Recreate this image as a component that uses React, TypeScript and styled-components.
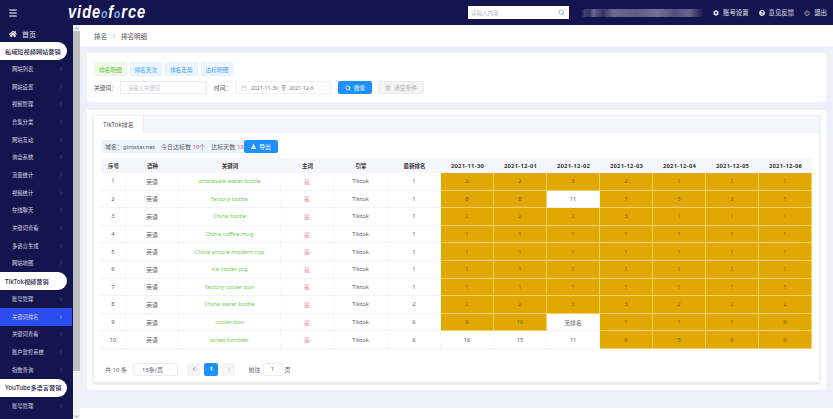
// React keyword rank page
import React from "react";
import styled, { createGlobalStyle } from "styled-components";
import { ChevronDown, ChevronLeft, ChevronRight, ChevronUp, Calendar, Menu, Power, Search, Trash2 } from "lucide-react";
import { FaCog, FaDownload, FaHome, FaQuestionCircle } from "react-icons/fa";

const GlobalStyle = createGlobalStyle`
  html, body {
    margin: 0;
    height: 100%;
    overflow: hidden;
    background: #fff;
    font-family: "Noto Sans", "Noto Sans CJK SC", sans-serif;
    font-size: 6px;
    color: #606266;
  }
  * {
    box-sizing: border-box;
  }
`;

const Shell = styled.div`
  height: 419px;
  width: 833px;
  display: flex;
  flex-direction: column;
  overflow: hidden;
`;

const TopBar = styled.header`
  flex: 0 0 25px;
  background: #14144e;
  display: flex;
  align-items: center;
  color: #fff;
  padding-right: 5px;
`;

const MenuButton = styled.div`
  width: 68px;
  padding-left: 8px;
  display: flex;
  align-items: center;
`;

const LogoSlot = styled.div`
  width: 400px;
`;

const Logo = styled.div`
  display: inline-block;
  transform: scaleX(0.775);
  transform-origin: left center;
  font-family: "Liberation Sans", sans-serif;
  font-size: 19px;
  font-weight: 700;
  font-style: italic;
  letter-spacing: 1.2px;
  color: #fff;
  line-height: 1;
  padding-bottom: 3px;
`;

const LogoDot = styled.span`
  font-size: 13px;
  color: #7fb2ec;
`;

const SearchBox = styled.div`
  width: 101px;
  height: 13px;
  background: #fff;
  display: flex;
  align-items: center;
  justify-content: space-between;
  padding: 0 4px 0 3px;
  color: #b5b8c0;
  font-size: 5.5px;
`;

const Mosaic = styled.div`
  width: 123px;
  height: 8px;
  margin-left: 12px;
  background: linear-gradient(
    90deg,
    #14144e 0,
    #3f3f70 3%,
    #33336a 7%,
    #66668c 10%,
    #33336a 18%,
    #6a6a90 26%,
    #5c5c86 45%,
    #727296 62%,
    #50507e 76%,
    #66668c 88%,
    #14144e 100%
  );
`;

const TopLink = styled.div<{ $gap: number }>`
  margin-left: ${(p) => p.$gap}px;
  display: flex;
  align-items: center;
  gap: 4px;
  font-size: 6.4px;
  color: #e4e4ee;
  white-space: nowrap;
`;

const Body = styled.div`
  flex: 1;
  display: flex;
  min-height: 0;
`;

const Sidebar = styled.nav`
  flex: 0 0 73px;
  background: #14144e;
  overflow: hidden;
  padding-right: 1px;
`;

const HomeRow = styled.div`
  height: 17px;
  display: flex;
  align-items: center;
  gap: 5px;
  padding-left: 9px;
  color: #e8e8f2;
  font-size: 7px;
`;

const GroupPill = styled.div`
  height: 18px;
  width: 67px;
  background: #fff;
  border-radius: 0 9px 9px 0;
  display: flex;
  align-items: center;
  padding-left: 5px;
  color: #1c1c44;
  font-size: 6.2px;
  font-weight: 500;
  white-space: nowrap;
`;

const NavItem = styled.div<{ $active?: boolean }>`
  height: 17.7px;
  display: flex;
  align-items: center;
  justify-content: space-between;
  padding: 0 8px 0 12px;
  background: ${(p) => (p.$active ? "#2b4cf0" : "transparent")};
  color: #d9d9e6;
  font-size: 5.3px;
  white-space: nowrap;
  svg {
    color: ${(p) => (p.$active ? "#fff" : "#5e5e8c")};
  }
`;

const ScrollTrack = styled.div`
  flex: 0 0 7px;
  background: #f1f1f1;
  display: flex;
  flex-direction: column;
  align-items: center;
  color: #555;
`;

const ScrollArrow = styled.div`
  height: 6px;
  display: flex;
  align-items: center;
`;

const ScrollThumb = styled.div`
  width: 100%;
  height: 340px;
  background: #c1c1c1;
`;

const Spacer = styled.div`
  flex: 1;
`;

const Main = styled.main`
  flex: 1;
  display: flex;
  flex-direction: column;
  min-width: 0;
`;

const Breadcrumb = styled.div`
  flex: 0 0 21px;
  background: #fff;
  display: flex;
  align-items: center;
  gap: 4px;
  padding-left: 14px;
  font-size: 6.5px;
  color: #555;
`;

const Content = styled.div`
  flex: 1;
  background: #edf0f8;
  padding: 7px 7px 18px;
  display: flex;
  flex-direction: column;
  gap: 8px;
`;

const Footer = styled.div`
  flex: 0 0 11px;
  background: #fff;
`;

const FilterPanel = styled.section`
  flex: 0 0 49px;
  background: #fff;
  padding: 9px 7px 0;
`;

const TagRow = styled.div`
  display: flex;
  gap: 3px;
  margin-bottom: 5px;
`;

const Tag = styled.div<{ $on?: boolean }>`
  width: 32.5px;
  height: 14px;
  border-radius: 2px;
  display: flex;
  align-items: center;
  justify-content: center;
  font-size: 5.7px;
  background: ${(p) => (p.$on ? "#f0f9eb" : "#ecf5ff")};
  border: 1px solid ${(p) => (p.$on ? "#e9f6e2" : "#e3f0ff")};
  color: ${(p) => (p.$on ? "#67c23a" : "#409eff")};
`;

const FilterRow = styled.div`
  display: flex;
  align-items: center;
  height: 13px;
`;

const FieldLabel = styled.span<{ $w: number }>`
  width: ${(p) => p.$w}px;
  flex: none;
  color: #444;
  font-size: 5.7px;
`;

const TextInput = styled.div`
  width: 87px;
  height: 13px;
  margin-right: 7px;
  border: 1px solid #eaecf1;
  border-radius: 2px;
  padding-left: 7px;
  display: flex;
  align-items: center;
  color: #c0c4cc;
  font-size: 5.3px;
`;

const DateRange = styled.div`
  width: 97px;
  height: 13px;
  margin-right: 6px;
  border: 1px solid #f0f1f5;
  border-radius: 2px;
  padding-left: 5px;
  display: flex;
  align-items: center;
  gap: 3px;
  color: #777;
  font-size: 5.2px;
  svg {
    color: #c0c4cc;
    margin-right: 1px;
  }
`;

const PrimaryButton = styled.div<{ $w: number }>`
  width: ${(p) => p.$w}px;
  height: 13px;
  flex: none;
  background: #1e90ff;
  border-radius: 2px;
  color: #fff;
  font-size: 5.8px;
  display: flex;
  align-items: center;
  justify-content: center;
  gap: 3px;
`;

const GhostButton = styled.div`
  width: 46px;
  height: 13px;
  margin-left: 6px;
  background: #f4f4f5;
  border: 1px solid #e9eaed;
  border-radius: 2px;
  color: #a6a9ad;
  font-size: 5.8px;
  display: flex;
  align-items: center;
  justify-content: center;
  gap: 3px;
`;

const TablePanel = styled.section`
  flex: 0 0 280px;
  background: #fff;
  padding: 5px 6px 7px;
  display: flex;
`;

const Card = styled.div`
  flex: 1;
  border: 1px solid #e9ebf0;
  box-shadow: 0 1px 2px rgba(0, 0, 0, 0.14);
  min-width: 0;
`;

const TabHeader = styled.div`
  height: 17px;
  background: #f5f7fa;
  border-bottom: 1px solid #f1f3f6;
`;

const ActiveTab = styled.div`
  width: 50px;
  height: 17px;
  background: #fff;
  border-right: 1px solid #e9ebf0;
  display: flex;
  align-items: center;
  justify-content: center;
  color: #555;
  font-size: 6.2px;
`;

const TabBody = styled.div`
  padding: 7px 7px 0;
`;

const DomainRow = styled.div`
  display: flex;
  align-items: center;
  height: 13px;
  margin-bottom: 5px;
`;

const DomainInfo = styled.div`
  width: 143px;
  height: 13px;
  background: #ecf5ff;
  border-radius: 2px;
  padding-left: 4px;
  display: flex;
  align-items: center;
  gap: 6px;
  font-size: 6px;
  color: #555;
  white-space: nowrap;
`;

const Red = styled.span`
  color: #e8435a;
`;

const RankTable = styled.table`
  width: 711px;
  table-layout: fixed;
  border-collapse: separate;
  border-spacing: 0;
  font-size: 5.8px;
`;

const Th = styled.th<{ $w: number; $date?: boolean }>`
  width: ${(p) => p.$w}px;
  height: 15px;
  padding: 0;
  background: #f5f7fa;
  color: #333;
  font-size: ${(p) => (p.$date ? 5.8 : 5.5)}px;
  font-weight: 700;
  letter-spacing: ${(p) => (p.$date ? 0.3 : 0)}px;
  text-align: center;
`;

const Td = styled.td`
  height: 17.6px;
  padding: 0;
  text-align: center;
  color: #606266;
  border-right: 1px solid #f7f8fa;
  border-bottom: 1px solid #f1f3f7;
`;

const KeywordCell = styled(Td)`
  color: #74c952;
`;

const MainWordCell = styled(Td)`
  color: #f78a8a;
`;

const RankCell = styled(Td)<{ $hit: boolean }>`
  background: ${(p) => (p.$hit ? "#e0a800" : "#fff")};
  color: ${(p) => (p.$hit ? "#7d5f10" : "#606266")};
  border-right-color: ${(p) => (p.$hit ? "#f4cf68" : "#f7f8fa")};
  border-bottom-color: ${(p) => (p.$hit ? "#f4cf68" : "#f1f3f7")};
`;

const Pager = styled.div`
  margin-top: 14px;
  padding-left: 4px;
  height: 13px;
  display: flex;
  align-items: center;
  color: #606266;
  font-size: 6px;
`;

const PageSize = styled.div`
  width: 45px;
  height: 13px;
  margin: 0 9px 0 6px;
  border: 1px solid #eaecf1;
  border-radius: 2px;
  padding: 0 4px 0 8px;
  display: flex;
  align-items: center;
  justify-content: space-between;
  svg {
    color: #c0c4cc;
  }
`;

const PageButton = styled.div<{ $current?: boolean }>`
  width: 13.5px;
  height: 13px;
  margin-right: 4px;
  border-radius: 2px;
  background: ${(p) => (p.$current ? "#1e90ff" : "#f4f4f5")};
  color: ${(p) => (p.$current ? "#fff" : "#606266")};
  font-weight: ${(p) => (p.$current ? 700 : 400)};
  display: flex;
  align-items: center;
  justify-content: center;
`;

const JumpInput = styled.div`
  width: 20px;
  height: 13px;
  margin: 0 2px;
  border: 1px solid #eaecf1;
  border-radius: 2px;
  display: flex;
  align-items: center;
  justify-content: center;
`;

const JumpLabel = styled.span`
  margin-left: 9px;
`;

const siteItems = ["网站列表", "网站设置", "视频管理", "合集分类", "网站互动", "询盘系统", "流量统计", "视频统计", "在线聊天", "关键词查看", "多语言生成", "网站地图"];
const tiktokItems = ["账号管理", "关键词排名", "关键词查看", "账户监控系统", "指数查询"];

const dates = ["2021-11-30", "2021-12-01", "2021-12-02", "2021-12-03", "2021-12-04", "2021-12-05", "2021-12-06"];

const rows: { keyword: string; latest: number; ranks: (number | string)[] }[] = [
  { keyword: "wholesale water bottle", latest: 1, ranks: [2, 2, 3, 2, 1, 1, 1] },
  { keyword: "factory bottle", latest: 1, ranks: [8, 8, 11, 7, 5, 2, 1] },
  { keyword: "China bottle", latest: 1, ranks: [2, 2, 2, 3, 1, 1, 1] },
  { keyword: "China coffee mug", latest: 1, ranks: [1, 1, 1, 1, 1, 1, 1] },
  { keyword: "China simple modern cup", latest: 1, ranks: [1, 1, 1, 1, 1, 1, 1] },
  { keyword: "ice cooler jug", latest: 1, ranks: [1, 1, 1, 1, 1, 1, 1] },
  { keyword: "factory cooler box", latest: 1, ranks: [1, 1, 1, 1, 1, 1, 1] },
  { keyword: "China water bottle", latest: 2, ranks: [2, 2, 3, 3, 2, 2, 2] },
  { keyword: "cooler box", latest: 6, ranks: [9, 10, "无排名", 1, 1, 1, 6] },
  { keyword: "straw tumbler", latest: 6, ranks: [16, 15, 11, 6, 5, 6, 6] },
];

// a rank counts as reached when it is on the first page of results
const isHit = (rank: number | string) => typeof rank === "number" && rank <= 10;

export default function App() {
  return (
    <Shell>
      <GlobalStyle />
      <TopBar>
        <MenuButton>
          <Menu size={10} strokeWidth={2.5} />
        </MenuButton>
        <LogoSlot>
          <Logo>
            vide<LogoDot>o</LogoDot>f<LogoDot>o</LogoDot>rce
          </Logo>
        </LogoSlot>
        <SearchBox>
          请输入内容
          <Search size={7} color="#5b8bc0" />
        </SearchBox>
        <Mosaic />
        <TopLink $gap={9}>
          <FaCog size={6} />
          账号设置
        </TopLink>
        <TopLink $gap={10}>
          <FaQuestionCircle size={6} />
          意见反馈
        </TopLink>
        <TopLink $gap={10}>
          <Power size={6} strokeWidth={2.5} />
          退出
        </TopLink>
      </TopBar>
      <Body>
        <Sidebar>
          <HomeRow>
            <FaHome size={8} />
            首页
          </HomeRow>
          <GroupPill>私域短视频网站营销</GroupPill>
          {siteItems.map((item) => (
            <NavItem key={item}>
              {item}
              <ChevronRight size={6} />
            </NavItem>
          ))}
          <GroupPill>TikTok视频营销</GroupPill>
          {tiktokItems.map((item, i) => (
            <NavItem key={i} $active={item === "关键词排名"}>
              {item}
              <ChevronRight size={6} />
            </NavItem>
          ))}
          <GroupPill>YouTube多语言营销</GroupPill>
          <NavItem>
            账号管理
            <ChevronRight size={6} />
          </NavItem>
        </Sidebar>
        <ScrollTrack>
          <ScrollArrow>
            <ChevronUp size={5} strokeWidth={3} />
          </ScrollArrow>
          <ScrollThumb />
          <Spacer />
          <ScrollArrow>
            <ChevronDown size={5} strokeWidth={3} />
          </ScrollArrow>
        </ScrollTrack>
        <Main>
          <Breadcrumb>
            排名
            <ChevronRight size={6} color="#888" />
            排名明细
          </Breadcrumb>
          <Content>
            <FilterPanel>
              <TagRow>
                <Tag $on>排名明细</Tag>
                <Tag>排名天次</Tag>
                <Tag>排名走势</Tag>
                <Tag>达标明细</Tag>
              </TagRow>
              <FilterRow>
                <FieldLabel $w={26}>关键词：</FieldLabel>
                <TextInput>请输入关键词</TextInput>
                <FieldLabel $w={21}>时间：</FieldLabel>
                <DateRange>
                  <Calendar size={6} />
                  2021-11-30
                  <span>至</span>
                  2021-12-6
                </DateRange>
                <PrimaryButton $w={34}>
                  <Search size={6} strokeWidth={3} />
                  搜索
                </PrimaryButton>
                <GhostButton>
                  <Trash2 size={6} />
                  清空条件
                </GhostButton>
              </FilterRow>
            </FilterPanel>
            <TablePanel>
              <Card>
                <TabHeader>
                  <ActiveTab>TikTok排名</ActiveTab>
                </TabHeader>
                <TabBody>
                  <DomainRow>
                    <DomainInfo>
                      <span>域名：gintstar.net</span>
                      <span>
                        今日达标数 <Red>10</Red>个
                      </span>
                      <span>
                        达标天数 <Red>13</Red>
                      </span>
                    </DomainInfo>
                    <PrimaryButton $w={34}>
                      <FaDownload size={5} />
                      导出
                    </PrimaryButton>
                  </DomainRow>
                  <RankTable>
                    <thead>
                      <tr>
                        <Th $w={25}>序号</Th>
                        <Th $w={53}>语种</Th>
                        <Th $w={102}>关键词</Th>
                        <Th $w={53}>主词</Th>
                        <Th $w={54}>引擎</Th>
                        <Th $w={53}>最新排名</Th>
                        {dates.map((d) => (
                          <Th key={d} $w={53} $date>
                            {d}
                          </Th>
                        ))}
                      </tr>
                    </thead>
                    <tbody>
                      {rows.map((row, i) => (
                        <tr key={row.keyword}>
                          <Td>{i + 1}</Td>
                          <Td>英语</Td>
                          <KeywordCell>{row.keyword}</KeywordCell>
                          <MainWordCell>是</MainWordCell>
                          <Td>Tiktok</Td>
                          <Td>{row.latest}</Td>
                          {row.ranks.map((rank, j) => (
                            <RankCell key={j} $hit={isHit(rank)}>
                              {rank}
                            </RankCell>
                          ))}
                        </tr>
                      ))}
                    </tbody>
                  </RankTable>
                  <Pager>
                    共 10 条
                    <PageSize>
                      15条/页
                      <ChevronDown size={5} />
                    </PageSize>
                    <PageButton>
                      <ChevronLeft size={6} strokeWidth={2.5} />
                    </PageButton>
                    <PageButton $current>1</PageButton>
                    <PageButton>
                      <ChevronRight size={6} color="#c0c4cc" />
                    </PageButton>
                    <JumpLabel>前往</JumpLabel>
                    <JumpInput>1</JumpInput>
                    页
                  </Pager>
                </TabBody>
              </Card>
            </TablePanel>
          </Content>
          <Footer />
        </Main>
      </Body>
    </Shell>
  );
}
